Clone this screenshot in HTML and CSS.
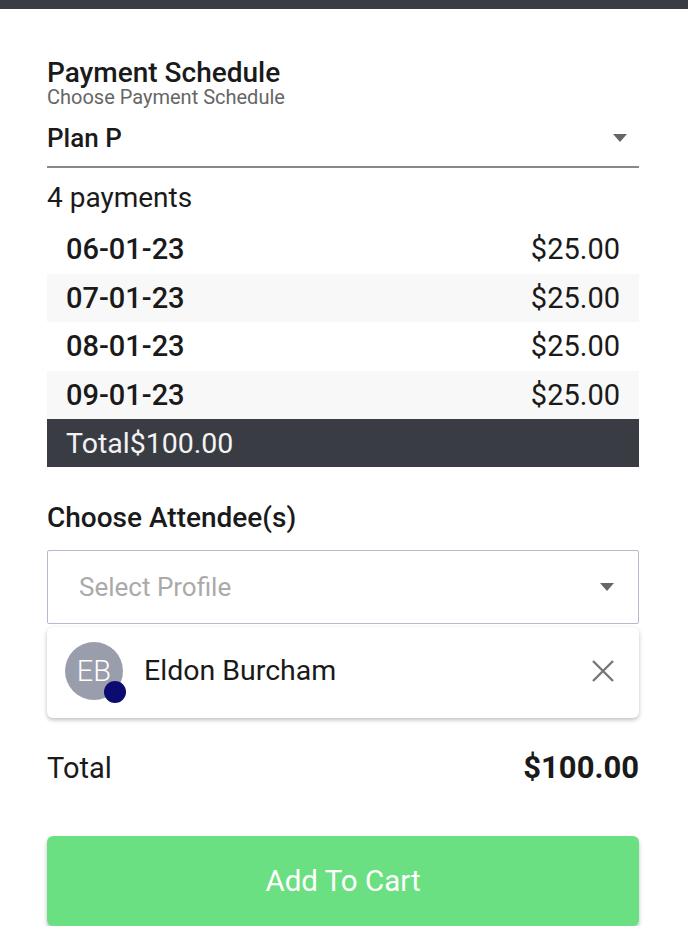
FILE: index.html
```html
<!DOCTYPE html>
<html>
<head>
  <title>Payment Schedule</title>
  <link rel="stylesheet" href="styles.css">
</head>
<body>

<div class="topbar"></div>

<div id="main">
  <div class="section-title">Payment Schedule</div>
  <div class="section-sub">Choose Payment Schedule</div>

  <div class="plan-select">
    <span>Plan P</span>
    <span class="caret"></span>
  </div>

  <div class="count">4 payments</div>

  <div class="schedule">
    <div class="row"><span class="date">06-01-23</span><span>$25.00</span></div>
    <div class="row alt"><span class="date">07-01-23</span><span>$25.00</span></div>
    <div class="row"><span class="date">08-01-23</span><span>$25.00</span></div>
    <div class="row alt"><span class="date">09-01-23</span><span>$25.00</span></div>
    <div class="row total-row"><span>Total$100.00</span></div>
  </div>

  <div class="section-title attendee-title">Choose Attendee(s)</div>

  <div class="profile-select">
    <span>Select Profile</span>
    <span class="caret"></span>
  </div>

  <div class="attendee">
    <div class="avatar">EB<span class="dot"></span></div>
    <div class="name">Eldon Burcham</div>
    <svg class="remove" width="24" height="24" viewBox="0 0 24 24">
      <path d="M2 2 L22 22 M22 2 L2 22" stroke="#777" stroke-width="2.4" fill="none"/>
    </svg>
  </div>

  <div class="grand-total">
    <span>Total</span>
    <span class="amount">$100.00</span>
  </div>

  <button class="cart-btn">Add To Cart</button>
</div>

</body>
</html>
```

FILE: styles.css
```css
body {
  font-family: Roboto, "Liberation Sans", sans-serif;
  background-color: white;
  color: #1a1a1a;
  margin: 0;
  padding: 0;
}

.topbar {
  height: 9px;
  background-color: #3a3c43;
}

#main {
  margin: 0 49px 0 47px;
  padding-top: 49px;
}

.section-title {
  font-size: 28px;
  font-weight: 500;
  line-height: 29px;
}

.section-sub {
  font-size: 20px;
  color: #666;
  line-height: 20px;
}

.caret {
  width: 0;
  height: 0;
  border-left: 7px solid transparent;
  border-right: 7px solid transparent;
  border-top: 8px solid #666;
}

.plan-select {
  display: flex;
  justify-content: space-between;
  align-items: center;
  height: 56px;
  margin-top: 3px;
  padding-right: 12px;
  font-size: 26px;
  font-weight: 500;
  border-bottom: 2px solid #888;
}

.count {
  font-size: 28px;
  line-height: 34px;
  margin-top: 13px;
}

.schedule {
  margin-top: 10px;
}

.row {
  display: flex;
  justify-content: space-between;
  align-items: center;
  height: 48.5px;
  padding: 0 19px;
  font-size: 29px;
}

.row.alt {
  background-color: #f8f8f8;
}

.date {
  font-weight: 500;
}

.total-row {
  background-color: #3a3c43;
  color: #f3f3f3;
  height: 48px;
  font-size: 28.5px;
}

.attendee-title {
  margin-top: 36px;
}

.profile-select {
  display: flex;
  justify-content: space-between;
  align-items: center;
  height: 72px;
  margin-top: 18px;
  padding: 0 24px 0 31px;
  border: 1.5px solid #b6bacb;
  border-radius: 2px;
  font-size: 26px;
  color: #aaa;
}

.attendee {
  display: flex;
  align-items: center;
  height: 91px;
  margin-top: 3px;
  padding: 0 24px 4px 18px;
  box-sizing: border-box;
  background-color: white;
  border-radius: 6px;
  box-shadow: 0 2px 4px rgba(0,0,0,0.25);
}

.avatar {
  position: relative;
  width: 58px;
  height: 58px;
  border-radius: 50%;
  background-color: #9a9dab;
  color: white;
  font-size: 29px;
  font-weight: 300;
  line-height: 58px;
  text-align: center;
}

.dot {
  position: absolute;
  right: -3px;
  bottom: -3px;
  width: 22px;
  height: 22px;
  border-radius: 50%;
  background-color: #0b0b72;
}

.name {
  flex: 1;
  margin-left: 21px;
  font-size: 28.5px;
}

.grand-total {
  display: flex;
  justify-content: space-between;
  align-items: center;
  margin-top: 32px;
  font-size: 29px;
  line-height: 36px;
}

.amount {
  font-size: 31px;
  font-weight: bold;
}

.cart-btn {
  display: block;
  width: 100%;
  height: 90px;
  margin-top: 50px;
  border: none;
  border-radius: 6px;
  background-color: #6be083;
  color: white;
  font-family: Roboto, "Liberation Sans", sans-serif;
  font-size: 29.5px;
  box-shadow: 0 3px 4px rgba(0,0,0,0.25);
}
```
